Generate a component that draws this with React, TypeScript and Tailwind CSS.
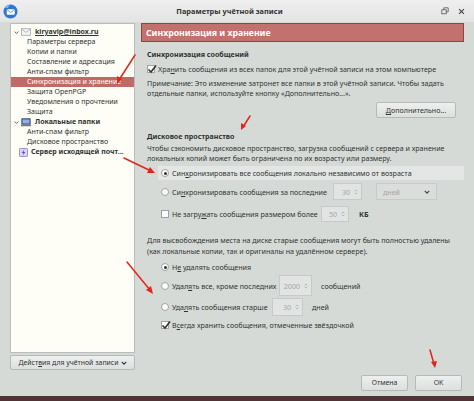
import React from 'react';

const font = { fontFamily: '"Noto Sans", "Open Sans", sans-serif' };

function Radio({ on }: { on?: boolean }) {
  return (
    <span className="w-[8px] h-[8px] rounded-full border border-[#9ea3a1] bg-white flex items-center justify-center shrink-0">
      {on && <span className="w-[3px] h-[3px] rounded-full bg-[#333]" />}
    </span>
  );
}

function Check({ on }: { on?: boolean }) {
  return (
    <span className="w-[8px] h-[8px] border border-[#9ea3a1] bg-white relative shrink-0">
      {on && (
        <svg viewBox="0 0 10 10" className="absolute -left-[1px] -top-[2px] w-[10px] h-[10px]">
          <path d="M1.5 5.5 L4 8 L9 1.5" fill="none" stroke="#333" strokeWidth="1.6" />
        </svg>
      )}
    </span>
  );
}

function Spin({ value, w }: { value: string; w: string }) {
  return (
    <span className={`${w} h-full border border-[#c6cac8] bg-[#e1e4e2] flex items-center justify-end pr-[3px] gap-[4px] text-[#a3a6a4] shrink-0`}>
      <span>{value}</span>
      <svg viewBox="0 0 6 10" className="w-[4px] h-[8px]">
        <path d="M1 4 L3 2 L5 4 M1 6 L3 8 L5 6" fill="none" stroke="#9a9d9b" strokeWidth="0.9" />
      </svg>
    </span>
  );
}

function Btn({ children, className }: { children: React.ReactNode; className: string }) {
  return (
    <div className={`${className} border border-[#b5b9b7] rounded-[2px] bg-gradient-to-b from-[#eef0ef] to-[#dcdfdd] flex items-center justify-center text-[#2e3432] whitespace-nowrap`}>
      {children}
    </div>
  );
}

const sub = [
  'Параметры сервера',
  'Копии и папки',
  'Составление и адресация',
  'Анти-спам фильтр',
];

export default function App() {
  return (
    <div className="w-[474px] h-[401px] relative overflow-hidden bg-[#d6dad7] text-[6.9px] text-[#2e3432] leading-[10px] whitespace-nowrap" style={font}>
      {/* Title bar */}
      <div className="h-[22px] flex items-center bg-gradient-to-b from-[#efefef] to-[#e3e4e3] px-[3px]">
        <svg viewBox="0 0 16 16" className="w-[15px] h-[15px]">
          <circle cx="8" cy="8" r="7.5" fill="#2f78d0" />
          <path d="M2 4 C3 2 5 1 7 1.5 L5 4 Z" fill="#8fc3f2" />
          <rect x="4" y="5.5" width="8.5" height="6" rx="1" fill="#fff" />
          <path d="M4.3 6 L8.2 9 L12.2 6" fill="none" stroke="#2f78d0" strokeWidth="0.8" />
        </svg>
        <div className="flex-1 text-center font-bold text-[7.4px] text-[#333]">Параметры учётной записи</div>
        <svg viewBox="0 0 10 10" className="w-[8px] h-[8px] mr-[9px]">
          <rect x="1" y="3.5" width="5.5" height="5" fill="none" stroke="#555" strokeWidth="1" />
          <path d="M3.5 3.5 V1 H9 V6 H6.5" fill="none" stroke="#555" strokeWidth="1" />
        </svg>
        <svg viewBox="0 0 10 10" className="w-[7px] h-[7px] mr-[6px]">
          <path d="M1.5 1.5 L8.5 8.5 M8.5 1.5 L1.5 8.5" stroke="#444" strokeWidth="1.6" />
        </svg>
      </div>

      {/* Body */}
      <div className="flex h-[348px] pt-[1px]">
        {/* Left column */}
        <div className="w-[125px] ml-[10px] flex flex-col">
          <div className="h-[330px] bg-[#fffef6] border border-[#b9bdbb] pt-[3px] text-[7px]">
            <div className="h-[10px] flex items-center pl-[3px] gap-[2px]">
              <svg viewBox="0 0 8 8" className="w-[5px] h-[5px]"><path d="M1 2.5 L4 5.5 L7 2.5" fill="none" stroke="#444" strokeWidth="1.3" /></svg>
              <svg viewBox="0 0 12 9" className="w-[10px] h-[8px]">
                <rect x="0.5" y="0.5" width="11" height="8" fill="#f4f4f4" stroke="#a9adab" />
                <path d="M0.8 1 L6 5 L11.2 1" fill="none" stroke="#a9adab" />
              </svg>
              <span className="font-bold underline ml-[2px]">kiryavip@inbox.ru</span>
            </div>
            {sub.map((t) => (
              <div key={t} className="h-[10px] pl-[16px] flex items-center">{t}</div>
            ))}
            <div className="h-[10px] pl-[16px] flex items-center bg-[#c06a68] text-white">Синхронизация и хранение</div>
            {['Защита OpenPGP', 'Уведомления о прочтении', 'Защита'].map((t) => (
              <div key={t} className="h-[10px] pl-[16px] flex items-center">{t}</div>
            ))}
            <div className="h-[10px] flex items-center pl-[3px] gap-[2px]">
              <svg viewBox="0 0 8 8" className="w-[5px] h-[5px]"><path d="M1 2.5 L4 5.5 L7 2.5" fill="none" stroke="#444" strokeWidth="1.3" /></svg>
              <svg viewBox="0 0 12 10" className="w-[10px] h-[9px]">
                <rect x="1" y="0.5" width="10" height="6.5" fill="#4a6fb5" stroke="#3a4a6a" />
                <rect x="2" y="1.5" width="8" height="4.5" fill="#8fb3e8" />
                <rect x="0" y="7.5" width="12" height="2" fill="#777" />
              </svg>
              <span className="font-bold ml-[2px]">Локальные папки</span>
            </div>
            {['Анти-спам фильтр', 'Дисковое пространство'].map((t) => (
              <div key={t} className="h-[10px] pl-[16px] flex items-center">{t}</div>
            ))}
            <div className="h-[10px] flex items-center pl-[8px] gap-[3px]">
              <svg viewBox="0 0 10 10" className="w-[9px] h-[9px]">
                <rect x="0.5" y="0.5" width="9" height="9" rx="1" fill="#dcd6f0" stroke="#8c84b8" />
                <path d="M6 1.5 L3 5.5 H5 L4 8.5 L7 4.5 H5 Z" fill="#5b4cb0" />
              </svg>
              <span className="font-bold">Сервер исходящей почт...</span>
            </div>
          </div>
          <Btn className="h-[15px] mt-[2px] gap-[2px]">
            <span>Дейст<span className="underline">в</span>ия для учётной записи</span>
            <svg viewBox="0 0 8 8" className="w-[6px] h-[6px]"><path d="M1 2.5 L4 5.5 L7 2.5" fill="none" stroke="#333" strokeWidth="1.5" /></svg>
          </Btn>
        </div>

        {/* Right column */}
        <div className="w-[323px] ml-[6px] flex flex-col">
          <div className="h-[19px] bg-[#c2716f] border border-[#8e4442] flex items-center pl-[4px] text-white font-bold text-[8.7px]">
            Синхронизация и хранение
          </div>
          <div className="pl-[6px] text-[7.1px]">
            <div className="h-[10px] mt-[7px] font-bold flex items-center">Синхронизация сообщений</div>
            <div className="h-[12px] mt-[4px] flex items-center gap-[3px]">
              <Check on />
              <span>Хра<span className="underline">н</span>ить сообщения из всех папок для этой учётной записи на этом компьютере</span>
            </div>
            <div className="h-[10px] mt-[3px] flex items-center">Примечание: Это изменение затронет все папки в этой учётной записи. Чтобы задать</div>
            <div className="h-[10px] flex items-center">отдельные папки, используйте кнопку «Дополнительно...».</div>
            <div className="flex justify-end pr-[8px] mt-[4px]">
              <Btn className="w-[80px] h-[16px]">
                <span><span className="underline">Д</span>ополнительно...</span>
              </Btn>
            </div>

            <div className="h-[10px] mt-[13px] font-bold flex items-center">Дисковое пространство</div>
            <div className="h-[10px] mt-[2px] flex items-center">Чтобы сэкономить дисковое пространство, загрузка сообщений с сервера и хранение</div>
            <div className="h-[10px] flex items-center">локальных копий может быть ограничена по их возрасту или размеру.</div>

            <div className="h-[14px] mt-[3px] ml-[11px] bg-[#e3e6e4] flex items-center pl-[3px] gap-[3px]">
              <Radio on />
              <span>Син<span className="underline">х</span>ронизировать все сообщения локально независимо от возраста</span>
            </div>
            <div className="h-[17px] mt-[3px] ml-[14px] flex items-center gap-[3px]">
              <Radio />
              <span className="w-[158px]">Си<span className="underline">н</span>хронизировать сообщения за последние</span>
              <Spin value="30" w="w-[29px]" />
              <span className="w-[61px] h-full ml-[11px] border border-[#c6cac8] bg-[#dadddb] flex items-center justify-between px-[6px] text-[#a3a6a4]">
                <span>дней</span>
                <svg viewBox="0 0 8 8" className="w-[6px] h-[6px]"><path d="M1 2.5 L4 5.5 L7 2.5" fill="none" stroke="#444" strokeWidth="1.5" /></svg>
              </span>
            </div>
            <div className="h-[16px] mt-[6px] ml-[14px] flex items-center gap-[3px]">
              <Check />
              <span className="w-[146px]">Не загру<span className="underline">ж</span>ать сообщения размером более</span>
              <Spin value="50" w="w-[28px]" />
              <span className="ml-[7px] font-bold">КБ</span>
            </div>

            <div className="h-[10px] mt-[13px] flex items-center">Для высвобождения места на диске старые сообщения могут быть полностью удалены</div>
            <div className="h-[10px] mt-[1px] flex items-center">(как локальные копии, так и оригиналы на удалённом сервере).</div>

            <div className="h-[12px] mt-[5px] ml-[14px] flex items-center gap-[3px]">
              <Radio on />
              <span>Н<span className="underline">е</span> удалять сообщения</span>
            </div>
            <div className="h-[21px] mt-[2px] ml-[14px] flex items-center gap-[3px]">
              <Radio />
              <span className="w-[104px]">Удал<span className="underline">я</span>ть все, кроме последних</span>
              <Spin value="2000" w="w-[33px]" />
              <span className="ml-[6px]">сообщений</span>
            </div>
            <div className="h-[18px] mt-[2px] ml-[14px] flex items-center gap-[3px]">
              <Radio />
              <span className="w-[97px]">Уда<span className="underline">л</span>ять сообщения старше</span>
              <Spin value="30" w="w-[31px]" />
              <span className="ml-[6px]">дней</span>
            </div>
            <div className="h-[12px] mt-[3px] ml-[14px] flex items-center gap-[3px]">
              <Check on />
              <span>В<span className="underline">с</span>егда хранить сообщения, отмеченные звёздочкой</span>
            </div>
          </div>
        </div>
      </div>

      {/* Footer buttons */}
      <div className="h-[26px] flex justify-end items-start pt-[5px] pr-[12px] gap-[7px]">
        <Btn className="w-[47px] h-[16px]">Отмена</Btn>
        <Btn className="w-[47px] h-[16px]">OK</Btn>
      </div>
      <div className="h-[5px] bg-[#4d3535]" />

      {/* Red annotation arrows */}
      <svg className="absolute inset-0 pointer-events-none" width="474" height="401" viewBox="0 0 474 401">
        <g stroke="#e3241c" strokeWidth="1.5" fill="#e3241c" strokeLinecap="round">
          <line x1="135" y1="55" x2="119" y2="80" />
          <path d="M117 84 L117 76 L122 79 Z" stroke="none" />
          <line x1="250" y1="116" x2="243" y2="127" />
          <path d="M241 130 L241 123 L246 126 Z" stroke="none" />
          <line x1="124" y1="158" x2="151" y2="171" />
          <path d="M155 173 L147 173 L150 167 Z" stroke="none" />
          <line x1="127" y1="262" x2="150" y2="290" />
          <path d="M153 294 L146 290 L151 286 Z" stroke="none" />
          <line x1="430" y1="350" x2="434" y2="364" />
          <path d="M435 368 L431 362 L437 361 Z" stroke="none" />
        </g>
      </svg>
    </div>
  );
}
